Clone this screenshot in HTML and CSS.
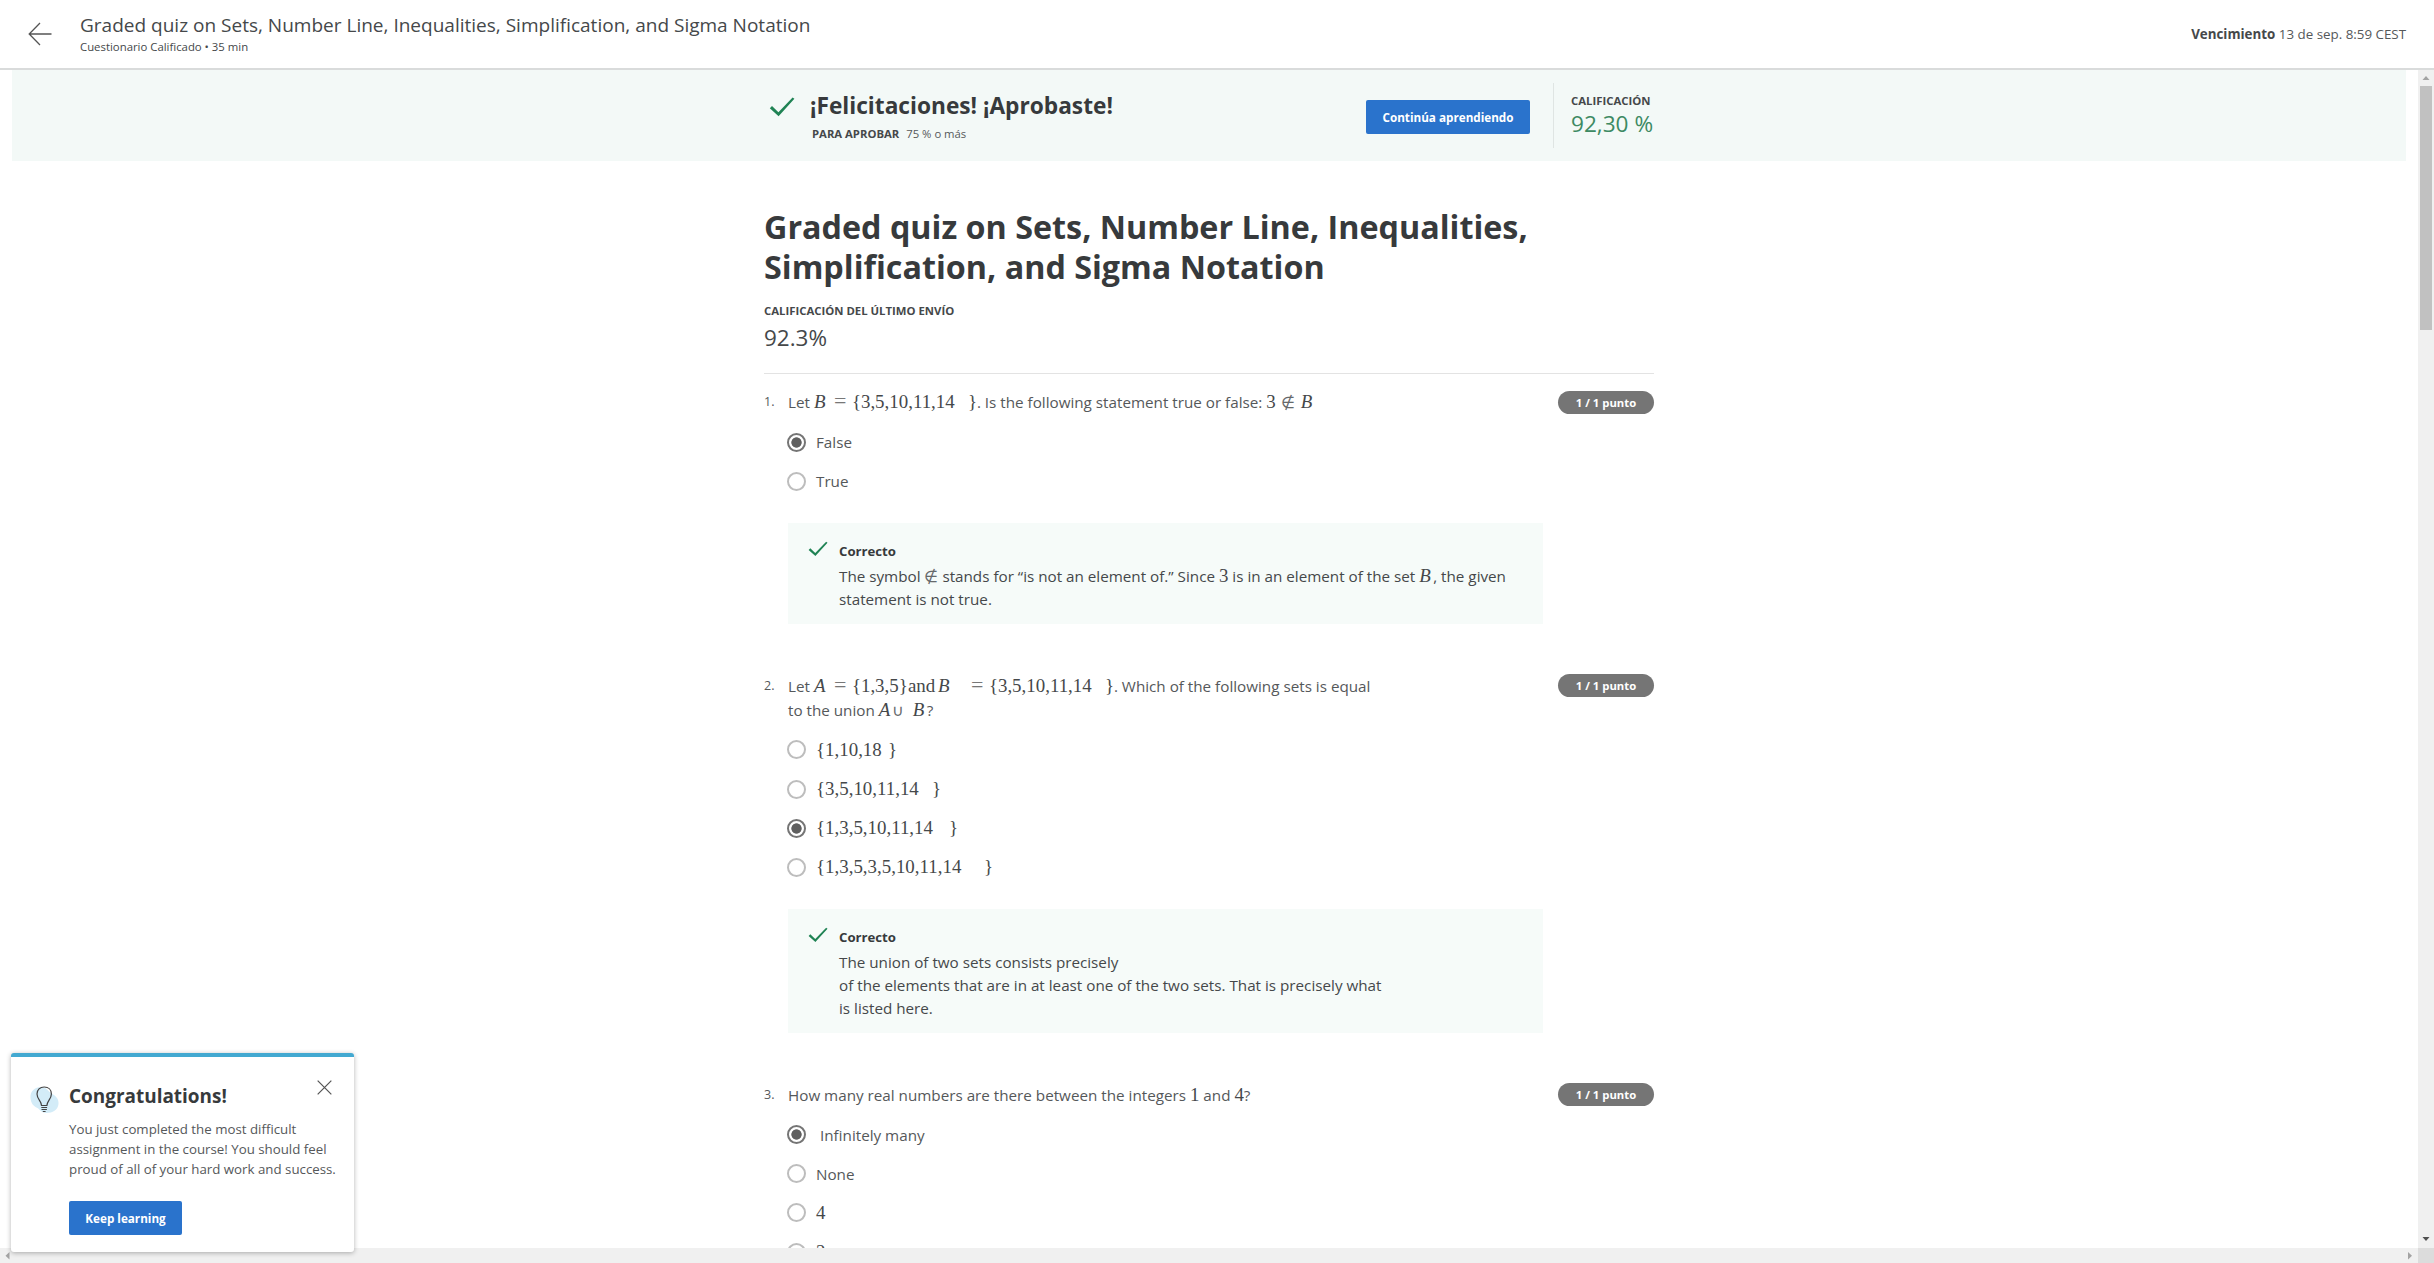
FILE: index.html
```html
<!DOCTYPE html>
<html lang="es">
<head>
<meta charset="utf-8">
<title>Graded quiz</title>
<link rel="stylesheet" href="styles.css">
</head>
<body>
<svg class="defs" width="0" height="0" aria-hidden="true">
  <symbol id="check" viewBox="0 0 26 20"><path d="M.8 11.3 3 8.9l6.400 6.300L23.600.6l1.800 1.200L9.600 19.200z" fill="#1f8354"/></symbol>
</svg>
<div class="app">
  <header class="topbar">
    <svg class="back" viewBox="0 0 24 24"><path d="M23.500 12H1.500M12 1 1.200 12 12 23" fill="none" stroke="#555" stroke-width="1.300"/></svg>
    <div class="topbar-titles">
      <div class="topbar-title">Graded quiz on Sets, Number Line, Inequalities, Simplification, and Sigma Notation</div>
      <div class="topbar-sub">Cuestionario Calificado • 35 min</div>
    </div>
    <div class="due"><b>Vencimiento</b> 13 de sep. 8:59 CEST</div>
  </header>

  <div class="body">
    <main class="content">
      <section class="banner">
        <div class="banner-inner">
          <svg class="banner-check"><use href="#check"/></svg>
          <div class="banner-text">
            <div class="banner-title">¡Felicitaciones! ¡Aprobaste!</div>
            <div class="banner-sub"><b>PARA APROBAR</b><span>75 % o más</span></div>
          </div>
          <button class="btn btn-continue">Continúa aprendiendo</button>
          <div class="grade">
            <div class="caps">CALIFICACIÓN</div>
            <div class="grade-value">92,30 %</div>
          </div>
        </div>
      </section>

      <div class="quiz">
        <h1>Graded quiz on Sets, Number Line, Inequalities,<br>Simplification, and Sigma Notation</h1>
        <div class="caps last-label">CALIFICACIÓN DEL ÚLTIMO ENVÍO</div>
        <div class="last-value">92.3%</div>

        <section class="question">
          <div class="num">1.</div>
          <div class="q-main">
            <div class="prompt">Let <span class="m w19"><i>B</i></span><span class="m eq w19">=</span><span class="m w116">{3,5,10,11,14</span><span class="m w9">}</span>. Is the following statement true or false: <span class="m">3</span><span class="m sym notin">∉</span><span class="m"><i>B</i></span></div>
            <div class="options">
              <div class="option"><span class="radio on"></span><span>False</span></div>
              <div class="option"><span class="radio"></span><span>True</span></div>
            </div>
            <div class="feedback">
              <svg class="fb-check"><use href="#check"/></svg>
              <div>
                <div class="fb-title">Correcto</div>
                <div class="fb-text">The symbol <span class="m sym">∉</span> stands for “is not an element of.” Since <span class="m">3</span> is in an element of the set <span class="m w14"><i>B</i></span>, the given<br>statement is not true.</div>
              </div>
            </div>
          </div>
          <div class="points">1 / 1 punto</div>
        </section>

        <section class="question">
          <div class="num">2.</div>
          <div class="q-main">
            <div class="prompt">Let <span class="m w19"><i>A</i></span><span class="m eq w19">=</span><span class="m w56">{1,3,5}</span><span class="m w30">and</span><span class="m w32"><i>B</i></span><span class="m eq w19">=</span><span class="m w116">{3,5,10,11,14</span><span class="m w9">}</span>. Which of the following sets is equal<br>to the union <span class="m w13"><i>A</i></span><span class="m sym w21">∪</span><span class="m w14"><i>B</i></span>?</div>
            <div class="options">
              <div class="option"><span class="radio"></span><span class="m w72">{1,10,18</span><span class="m">}</span></div>
              <div class="option"><span class="radio"></span><span class="m w116">{3,5,10,11,14</span><span class="m">}</span></div>
              <div class="option"><span class="radio on"></span><span class="m w133">{1,3,5,10,11,14</span><span class="m">}</span></div>
              <div class="option"><span class="radio"></span><span class="m w168">{1,3,5,3,5,10,11,14</span><span class="m">}</span></div>
            </div>
            <div class="feedback">
              <svg class="fb-check"><use href="#check"/></svg>
              <div>
                <div class="fb-title">Correcto</div>
                <div class="fb-text">The union of two sets consists precisely<br>of the elements that are in at least one of the two sets. That is precisely what<br>is listed here.</div>
              </div>
            </div>
          </div>
          <div class="points">1 / 1 punto</div>
        </section>

        <section class="question">
          <div class="num">3.</div>
          <div class="q-main">
            <div class="prompt">How many real numbers are there between the integers <span class="m">1</span> and <span class="m">4</span>?</div>
            <div class="options">
              <div class="option"><span class="radio on"></span><span class="indent">Infinitely many</span></div>
              <div class="option"><span class="radio"></span><span>None</span></div>
              <div class="option"><span class="radio"></span><span class="m">4</span></div>
              <div class="option"><span class="radio"></span><span class="m">2</span></div>
            </div>
          </div>
          <div class="points">1 / 1 punto</div>
        </section>
      </div>
    </main>
    <div class="vbar">
      <svg viewBox="0 0 16 16"><path d="M4.500 10 8 6l3.500 4z" fill="#a3a3a3"/></svg>
      <div class="thumb"></div>
      <svg class="down" viewBox="0 0 16 16"><path d="M4.500 5 8 9l3.500-4z" fill="#505050"/></svg>
    </div>
  </div>

  <div class="hbar">
    <svg viewBox="0 0 16 15"><path d="M9.500 4v7.500L5.500 7.750z" fill="#a3a3a3"/></svg>
    <svg class="right" viewBox="0 0 16 15"><path d="M6 4v7.500l4-3.750z" fill="#a3a3a3"/></svg>
    <div class="corner"></div>
  </div>
</div>

<aside class="toast">
  <svg class="bulb" viewBox="0 0 30 28">
    <path d="M.5 12C0 5 5 1 11 1c5 0 7 4 10 6 5 3 8 6 7.500 11-.5 6-6 9-12 9-5 0-6-3-9-5C3 20 1 17 .5 12z" fill="#d3ecf8"/>
    <path d="M11.500 19.500c0-4.500-4.500-6.500-4.500-11.500 0-4.300 3-7 7.200-7s7.200 2.700 7.200 7c0 5-4.500 7-4.500 11.500z" fill="none" stroke="#444" stroke-width="1.200"/>
    <path d="M11.300 21.500h5.800M11.500 23.500h5.400M12.800 25.500h2.800" fill="none" stroke="#444" stroke-width="1.200"/>
  </svg>
  <div class="toast-body">
    <div class="toast-head">
      <div class="toast-title">Congratulations!</div>
      <svg class="close" viewBox="0 0 16 16"><path d="M.7.7l14.600 14.600M15.300.7.7 15.300" stroke="#555" stroke-width="1.300" fill="none"/></svg>
    </div>
    <p>You just completed the most difficult<br>assignment in the course! You should feel<br>proud of all of your hard work and success.</p>
    <button class="btn btn-keep">Keep learning</button>
  </div>
</aside>
</body>
</html>
```
FILE: styles.css
```css
* { box-sizing: border-box; }
body {
  margin: 0;
  background: #fff;
  color: #55585a;
  font: 15.220px/24px "Open Sans", sans-serif;
  overflow: hidden;
}
b { color: #45484a; }
.defs { position: absolute; }
.app { display: grid; grid-template-rows: 70px 1178px 15px; height: 1263px; }

.topbar { display: flex; border-bottom: 2px solid #d9dbdb; padding: 0 28px; }
.back { width: 24px; height: 24px; margin: 22px 28px 0 0; }
.topbar-titles { flex: 1; padding-top: 12px; }
.topbar-title { font-size: 19.020px; line-height: 26px; color: #45484a; }
.topbar-sub { font-size: 11.360px; line-height: 18px; color: #45484a; }
.due { font-size: 13.350px; line-height: 68px; white-space: pre; }

.body { display: flex; min-height: 0; }
.content { flex: 1; padding: 0 12px; overflow: hidden; }
.banner { height: 91px; background: #f3f9f7; }
.banner-inner { display: flex; width: 890px; margin-left: 752px; }
.banner-check { width: 26px; height: 20px; margin: 27px 15px 0 5px; }
.banner-text { flex: 1; padding-top: 22px; }
.banner-title { font-size: 22.700px; line-height: 28px; font-weight: 700; color: #373a3c; }
.banner-sub { display: flex; gap: 7px; padding-left: 2px; font-size: 11.300px; line-height: 20px; margin-top: 4px; }
.btn {
  border: 0; border-radius: 2px; padding: 0;
  background: #2a73cc; color: #fff;
  font: 700 11.700px/34px "Open Sans", sans-serif;
}
.btn-continue { width: 164px; height: 34px; margin: 30px 23px 0 0; }
.grade { width: 101px; height: 65px; margin-top: 13px; padding: 8px 0 0 17px; border-left: 1px solid #dfe5e3; }
.caps { font-size: 11.350px; line-height: 20px; font-weight: 700; color: #45484a; }
.grade-value { font-size: 22.600px; line-height: 26px; color: #3d8a63; white-space: nowrap; }

.quiz { width: 890px; margin-left: 752px; padding-top: 46px; }
h1 { margin: 0; font-size: 32.300px; line-height: 39.700px; font-weight: 700; color: #373a3c; }
.last-label { margin-top: 15px; }
.last-value { font-size: 22.460px; line-height: 32px; margin-top: 1px; height: 52px; border-bottom: 1px solid #e3e3e3; margin-bottom: 16px; color: #45484a; }

.question { display: grid; grid-template-columns: 24px 755px 1fr; margin-bottom: 50px; }
.num { font-size: 12.500px; line-height: 24px; }
.prompt { white-space: nowrap; }
.points {
  justify-self: end; width: 96px; height: 23px; border-radius: 12px;
  background: #757575; color: #fff; text-align: center; margin-top: .5px;
  font-size: 11.300px; line-height: 23px; font-weight: 700;
}
.options { padding-top: 8.400px; }
.option { display: flex; align-items: center; height: 39.100px; }
.radio {
  width: 19px; height: 19px; margin: 0 10px 0 -1px;
  border: 2px solid #bdbdbd; border-radius: 50%;
}
.radio.on { border-color: #757575; background: radial-gradient(circle, #5f5f5f 4.800px, #fff 5.500px); }
.indent { padding-left: 4px; }

.feedback { display: flex; margin-top: 22px; padding: 16px 20px 12.500px; background: #f6fbf9; color: #45484a; }
.fb-check { width: 20px; height: 16px; margin: 2.500px 11px 0 0; }
.fb-title { font-size: 13.200px; font-weight: 700; color: #373a3c; }
.fb-text { margin-top: 2.300px; line-height: 23.100px; white-space: nowrap; }

.m { display: inline-block; font: 18.900px/0 "Liberation Serif", serif; color: #45484a; white-space: nowrap; }
.sym { font-family: "DejaVu Sans", sans-serif; font-size: 16px; font-weight: 200; color: #66696b; }
.eq { color: #777; font-size: 22px; text-indent: 1px; }
.notin { width: 25px; text-align: center; }
.w9 { width: 9px; }
.w13 { width: 13px; }
.w14 { width: 14px; }
.w19 { width: 19px; }
.w21 { width: 21px; }
.w30 { width: 30px; }
.w32 { width: 32px; }
.w56 { width: 56px; }
.w72 { width: 72px; }
.w116 { width: 116px; }
.w133 { width: 133px; }
.w168 { width: 168px; }

.vbar { display: flex; flex-direction: column; width: 16px; background: #f0f0f0; }
.vbar svg { width: 16px; height: 16px; }
.thumb { height: 244px; margin: 0 2px; background: #c1c1c1; }
.vbar .down { margin-top: auto; }
.hbar { display: flex; background: #f0f0f0; }
.hbar svg { width: 16px; height: 15px; }
.hbar .right { margin-left: auto; }
.corner { width: 16px; background: #dcdcdc; }

.toast {
  position: absolute; left: 11px; top: 1053px; width: 343px; height: 199px;
  display: flex; padding: 29px 17px 0 19px;
  border-top: 4.500px solid #43a9d1; border-radius: 3px;
  background: #fff; box-shadow: 0 1px 5px rgba(0, 0, 0, .3);
}
.bulb { width: 30px; height: 28px; margin-right: 9px; }
.toast-body { flex: 1; }
.toast-head { display: flex; justify-content: space-between; height: 26px; }
.toast-title { font-size: 18.950px; line-height: 26px; margin-top: -3px; font-weight: 700; color: #373a3c; }
.close { width: 15px; height: 15px; margin: -6px 5px 0 0; }
.toast p { margin: 7px 0 22px; font-size: 13.290px; line-height: 20px; white-space: nowrap; }
.btn-keep { width: 113px; height: 34px; display: block; }
```
